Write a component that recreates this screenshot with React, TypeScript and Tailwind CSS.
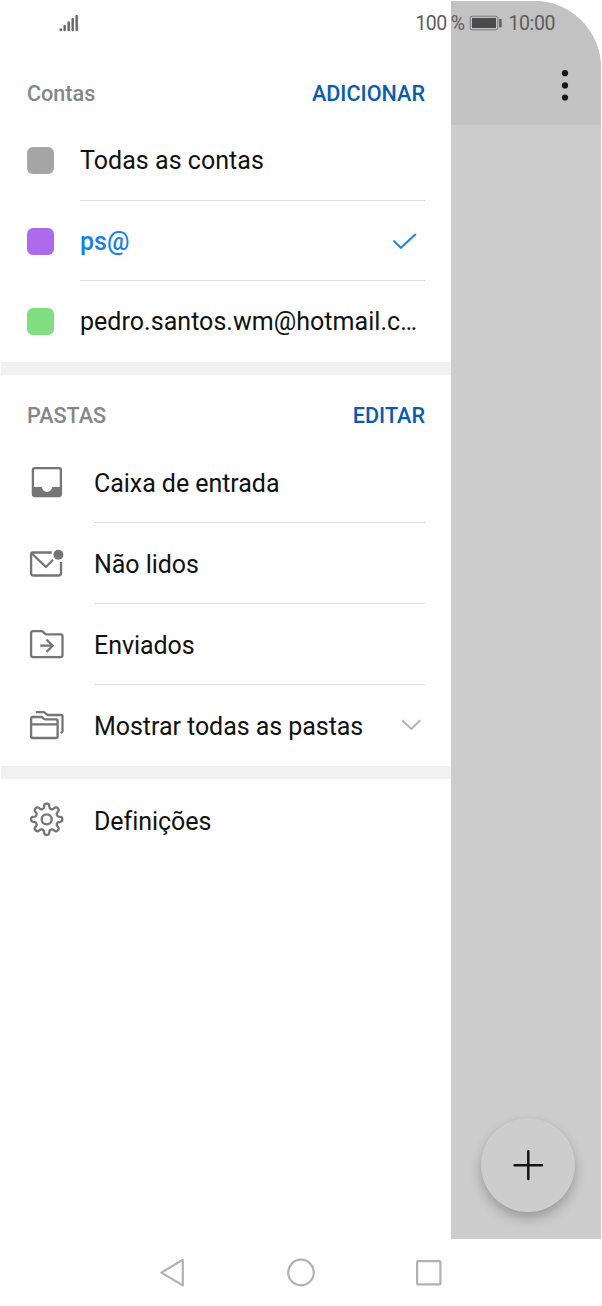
import React from "react";

interface Account {
  name: string;
  color: string;
  selected?: boolean;
}

interface RowProps {
  icon: React.ReactNode;
  label: string;
  divider?: boolean;
  trailing?: React.ReactNode;
}

const accounts: Account[] = [
  { name: "Todas as contas", color: "bg-[#a5a5a5]" },
  { name: "ps@", color: "bg-[#ad6aec]", selected: true },
  { name: "pedro.santos.wm@hotmail.c…", color: "bg-[#80de80]" },
];

// Outline of the settings gear: eight rounded teeth around the centre
const gearPoints = Array.from({ length: 144 }, (_, i) => {
  const a = (i / 144) * Math.PI * 2;
  const r = 13.4 + 2.3 * Math.tanh(2 * Math.cos(8 * a));
  return `${(17.7 + r * Math.sin(a)).toFixed(2)},${(18.3 - r * Math.cos(a)).toFixed(2)}`;
}).join(" ");

const Icon: React.FC<{ children: React.ReactNode }> = ({ children }) => (
  <svg
    className="h-9 w-9 shrink-0 text-[#757575]"
    viewBox="0 0 36 36"
    fill="none"
    stroke="currentColor"
    strokeWidth="2.3"
    strokeLinejoin="round"
  >
    {children}
  </svg>
);

const InboxIcon = () => (
  <Icon>
    <rect x="3.9" y="4.1" width="28" height="28" rx="2" />
    <path
      d="M3.5 23H12.7C13.3 26 15.3 27.9 18 27.9S22.7 26 23.3 23H32.3V30.7L31 32.2H5L3.5 30.7Z"
      fill="currentColor"
      stroke="none"
    />
  </Icon>
);

const UnreadIcon = () => (
  <Icon>
    <path d="M22.8 7.5H4Q2.1 7.5 2.1 9.2V28.6Q2.1 30.5 4 30.5H30Q32 30.5 32 28.6V17" />
    <path d="M2.8 8.5L16.9 22L24 14.8" />
    <circle cx="29.4" cy="9.8" r="5" fill="currentColor" stroke="none" />
  </Icon>
);

const SentIcon = () => (
  <Icon>
    <path d="M4 5.2H12.5Q13.3 5.2 14 5.8L16 7.7Q16.7 8.3 17.5 8.3H31.5Q33.5 8.3 33.5 10.2V29.2Q33.5 31.1 31.5 31.1H4Q2.1 31.1 2.1 29.2V7.1Q2.1 5.2 4 5.2Z" />
    <path d="M11.2 19.7H23.5M17.5 13.5L23.7 19.7L17.5 25.9" />
  </Icon>
);

const FoldersIcon = () => (
  <Icon>
    <path d="M3.6 10H12.3Q13 10 13.7 10.7L15 11.9Q15.6 12.4 16.4 12.4H27Q28.6 12.4 28.6 14V29.4Q28.6 31 27 31H3.7Q2.1 31 2.1 29.4V11.6Q2.1 10 3.6 10ZM2.1 17.4H28.6" />
    <path d="M6.8 5.2H14.5Q15.3 5.2 16 5.8L17.8 7.4Q18.5 8 19.3 8H31.9Q33.5 8 33.5 9.6V24.5L31.9 26.2" />
  </Icon>
);

const SettingsIcon = () => (
  <Icon>
    <polygon points={gearPoints} />
    <circle cx="17.7" cy="18.3" r="5" />
  </Icon>
);

const SectionTitle: React.FC<{ title: string; action: string; className: string }> = ({
  title,
  action,
  className,
}) => (
  <div className={`flex items-start justify-between pr-[26px] pl-[27px] text-[21.6px] leading-[26px] font-medium ${className}`}>
    <h2 className="text-[#868686]">{title}</h2>
    <button type="button" className="text-[#0b5cad]">
      {action}
    </button>
  </div>
);

const FolderRow: React.FC<RowProps> = ({ icon, label, divider, trailing }) => (
  <div className="flex h-[81px] pr-[26px] pl-[29px]">
    <div className="flex h-20 w-[65px] items-center">{icon}</div>
    <div
      className={`flex flex-1 items-center justify-between border-b ${divider || trailing ? "pt-[3px]" : "pt-[5px]"} ${divider ? "border-[#dedede]" : "border-transparent"}`}
    >
      <span className="tracking-[-0.05px]">{label}</span>
      {trailing}
    </div>
  </div>
);

const StatusBar = () => (
  <div className="absolute inset-x-0 top-0 flex h-[46px] items-center justify-between pr-[47px] pl-[59px] text-[19.5px] text-[#5c5c5c]">
    <svg className="h-5 w-5" viewBox="0 0 20 20" stroke="#6b6b6b" strokeWidth="2.5" strokeLinecap="round">
      <path d="M1.7 16.6V17M5.7 13V17M9.7 9.5V17M13.7 6V17M17.7 3V17" />
    </svg>
    <div className="flex items-center">
      <span className="pt-0.5 tracking-[-0.6px]">100 %</span>
      <svg className="mr-[5px] ml-[5px] h-4 w-[34px]" viewBox="0 0 34 16">
        <rect x="1.2" y="1.2" width="27.6" height="13.6" rx="2" fill="none" stroke="#777" strokeWidth="1" />
        <rect x="3" y="3" width="24" height="10" fill="#4b4b4b" />
        <rect x="30.2" y="3.8" width="2.4" height="8.6" rx="1" fill="#5c5c5c" />
      </svg>
      <span className="pt-0.5 tracking-[-0.4px]">10:00</span>
    </div>
  </div>
);

const Drawer = () => (
  <aside className="w-[451px] shrink-0 bg-[#fefefe]">
    <SectionTitle title="Contas" action="ADICIONAR" className="h-[120px] pt-[81px]" />
    {accounts.map((account, i) => (
      <div key={account.name} className={`flex pr-[26px] pl-[27px] ${i === 1 ? "h-20" : "h-[81px]"}`}>
        <div className="flex h-20 w-[53px] items-center pt-px">
          <span className={`h-[27px] w-[27px] rounded-md ${account.color}`} />
        </div>
        <div className={`flex flex-1 items-center justify-between border-b pt-0.5 ${i < 2 ? "border-[#dedede]" : "border-transparent"}`}>
          <span className={`whitespace-nowrap tracking-[0.04px] ${account.selected ? "font-medium text-[#1680e4]" : ""}`}>
            {account.name}
          </span>
          {account.selected && (
            <svg className="mr-2 mb-0.5 h-4 w-6" viewBox="0 0 24 16" fill="none" stroke="#1f80df" strokeWidth="2">
              <path d="M.5 7.6L7.9 14.8L22.8.9" />
            </svg>
          )}
        </div>
      </div>
    ))}
    <div className="ml-px h-[13px] bg-[#f1f1f1]" />
    <SectionTitle title="PASTAS" action="EDITAR" className="h-[67px] pt-[28px]" />
    <FolderRow icon={<InboxIcon />} label="Caixa de entrada" divider />
    <FolderRow icon={<UnreadIcon />} label="Não lidos" divider />
    <FolderRow icon={<SentIcon />} label="Enviados" divider />
    <FolderRow
      icon={<FoldersIcon />}
      label="Mostrar todas as pastas"
      trailing={
        <svg className="mr-1 mb-1 h-3 w-5" viewBox="0 0 20 12" fill="none" stroke="#b3b3b3" strokeWidth="2">
          <path d="M1.2 1.3L10.3 9.9L19.3 1.3" />
        </svg>
      }
    />
    <div className="ml-px h-[13px] bg-[#f1f1f1]" />
    <FolderRow icon={<SettingsIcon />} label="Definições" />
  </aside>
);

// Mail list behind the drawer, dimmed by the scrim
const Backdrop = () => (
  <main className="mt-px mr-px flex flex-1 flex-col justify-between overflow-hidden rounded-tr-[67px] bg-[#cccccc]">
    <header className="flex h-[124px] justify-end bg-[#c2c2c2] pt-[68px] pr-[32px]">
      <svg className="h-9 w-2" viewBox="0 0 8 36" fill="#151515">
        <circle cx="4" cy="4.2" r="3.1" />
        <circle cx="4" cy="16.4" r="3.1" />
        <circle cx="4" cy="28.5" r="3.1" />
      </svg>
    </header>
    <button
      type="button"
      className="mr-[26px] mb-[27px] flex h-[94px] w-[94px] items-center justify-center self-end rounded-full bg-[#cdcdcd] shadow-[0_6px_12px_rgba(0,0,0,0.24),0_0_2px_rgba(0,0,0,0.05)]"
    >
      <svg className="h-8 w-8" viewBox="0 0 32 32" stroke="#151515" strokeWidth="2.5" strokeLinecap="round">
        <path d="M2.6 16.2H30M16.3 2.2V30" />
      </svg>
    </button>
  </main>
);

const NavigationBar = () => (
  <nav className="flex h-[67px] items-center justify-center">
    <svg className="h-[30px] w-[284px]" viewBox="0 0 284 30" fill="none" stroke="#b2b2b2" strokeWidth="2.2" strokeLinejoin="round">
      <path d="M23.8 1.8V27.4L2.4 14.6Z" />
      <circle cx="142" cy="14.5" r="12.8" />
      <rect x="258.1" y="3.1" width="23.3" height="23.3" rx="1" />
    </svg>
  </nav>
);

const App: React.FC = () => (
  <div className="relative h-[1306px] w-[602px] overflow-hidden bg-[#fefefe] font-[Roboto,sans-serif] text-[25px] leading-[32px] text-[#111]">
    <div className="flex h-[1239px]">
      <Drawer />
      <Backdrop />
    </div>
    <NavigationBar />
    <StatusBar />
  </div>
);

export default App;
